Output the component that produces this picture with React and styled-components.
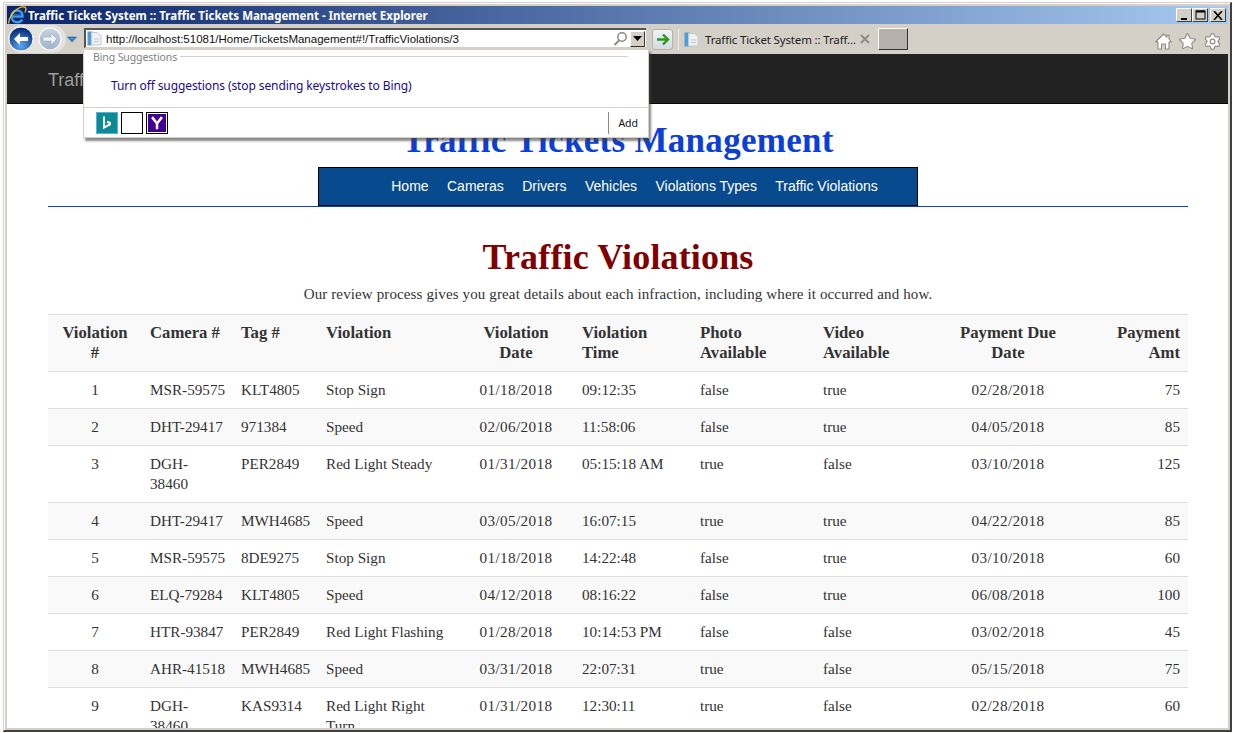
import React from "react";
import styled, { createGlobalStyle } from "styled-components";
import { Settings, Star } from "lucide-react";

const Global = createGlobalStyle`
  html, body { margin: 0; padding: 0; background: #fff; overflow: hidden; }
  #root { height: 733px; }
`;

const chromeFont = `"Noto Sans", "Liberation Sans", sans-serif`;
const pageFont = `"Liberation Serif", "DejaVu Serif", serif`;

const Frame = styled.div`
  box-sizing: border-box;
  position: relative;
  width: 1229px;
  height: 730px;
  margin: 2px 0 0 3px;
  padding: 3px 2px 2px 3px;
  display: flex;
  flex-direction: column;
  background: #d4d0c8;
  border-style: solid;
  border-width: 1px 2px 2px 1px;
  border-color: #d4d0c8 #404040 #404040 #d4d0c8;
  box-shadow: inset 1px 1px 0 #fff;
`;
const TitleBar = styled.div`
  height: 18px;
  flex: none;
  display: flex;
  align-items: center;
  padding-left: 1px;
  background: linear-gradient(90deg, #0a246a, #a6caf0);
`;
const TitleText = styled.span`
  margin-left: 1px;
  font: bold 11.5px ${chromeFont};
  color: #fff;
  white-space: nowrap;
`;
const WinButtons = styled.div`
  margin-left: auto;
  margin-right: 2px;
  display: flex;
`;
const WinButton = styled.div`
  box-sizing: border-box;
  width: 16px;
  height: 14px;
  margin-left: ${(p) => p.$gap || 0}px;
  background: #d4d0c8;
  border: 1px solid;
  border-color: #fff #404040 #404040 #fff;
  display: flex;
  align-items: center;
  justify-content: center;
`;
const Toolbar = styled.div`
  position: relative;
  height: 30px;
  flex: none;
  display: flex;
  align-items: center;
  background: #d4d0c8;
`;
const NavPill = styled.div`
  width: 58px;
  height: 28px;
  margin-left: 1px;
  display: flex;
  align-items: center;
  gap: 4px;
  border-radius: 14px;
  background: #e4e2dc;
`;
const Address = styled.div`
  box-sizing: border-box;
  width: 562px;
  height: 20px;
  margin: -2px 0 0 6px;
  padding: 0 1px 0 1px;
  display: flex;
  align-items: center;
  background: #fff;
  border: 1px solid;
  border-width: 2px 0 1px 2px;
  border-color: #555 #d4d0c8 #d4d0c8 #555;
`;
const Url = styled.span`
  margin-left: 4px;
  flex: 1;
  font: 11.5px "Liberation Sans", sans-serif;
  color: #111;
  white-space: nowrap;
`;
const DropBox = styled.div`
  box-sizing: border-box;
  width: 15px;
  height: 16px;
  margin-left: 2px;
  background: #d4d0c8;
  border: 1px solid;
  border-color: #fff #333 #333 #fff;
  display: flex;
  align-items: center;
  justify-content: center;
`;
const GoButton = styled.div`
  box-sizing: border-box;
  width: 21px;
  height: 21px;
  margin-left: 6px;
  border: 1px solid #b5b2aa;
  border-radius: 3px;
  background: linear-gradient(#f0f3f6, #d2dbe2);
  display: flex;
  align-items: center;
  justify-content: center;
`;
const Tab = styled.div`
  box-sizing: border-box;
  width: 200px;
  height: 21px;
  margin-left: 5px;
  padding-left: 5px;
  display: flex;
  align-items: center;
  border-left: 1px solid #eeece6;
`;
const TabText = styled.span`
  margin-left: 6px;
  width: 155px;
  font: 11.5px ${chromeFont};
  letter-spacing: -0.15px;
  color: #222;
  white-space: nowrap;
`;
const NewTab = styled.div`
  box-sizing: border-box;
  width: 30px;
  height: 22px;
  background: #b5b1aa;
  border: 1px solid;
  border-color: #fff #333 #333 #fff;
`;
const ToolIcons = styled.div`
  margin-left: auto;
  margin-right: 6px;
  margin-top: 4px;
  display: flex;
  align-items: center;
  gap: 6px;
`;
const Popup = styled.div`
  box-sizing: border-box;
  position: absolute;
  left: 76px;
  top: 25px;
  z-index: 5;
  width: 566px;
  height: 89px;
  background: #fff;
  border: 1px solid #d4d0c8;
  box-shadow: 2px 3px 2px rgba(60, 60, 60, 0.6);
  display: flex;
  flex-direction: column;
`;
const PopupHead = styled.div`
  height: 13px;
  margin: 0 20px 0 9px;
  display: flex;
  align-items: center;
  gap: 3px;
  font: 10.5px ${chromeFont};
  letter-spacing: -0.1px;
  color: #808080;
`;
const HeadLine = styled.div`
  flex: 1;
  height: 1px;
  background: #d4d0c8;
`;
const Suggest = styled.div`
  height: 44px;
  padding-left: 27px;
  display: flex;
  align-items: center;
  font: 12px ${chromeFont};
  letter-spacing: -0.1px;
  color: #1a0a8c;
  border-bottom: 1px solid #d4d0c8;
`;
const Providers = styled.div`
  flex: 1;
  padding: 4px 10px 0 12px;
  display: flex;
  align-items: flex-start;
`;
const Provider = styled.div`
  box-sizing: border-box;
  width: 22px;
  height: 22px;
  margin-right: 3px;
  background: #fff;
  border: 1px solid ${(p) => p.$edge || "#000"};
  display: flex;
  align-items: center;
  justify-content: center;
`;
const AddLink = styled.div`
  margin-left: auto;
  height: 22px;
  padding-left: 9px;
  display: flex;
  align-items: center;
  border-left: 1px solid #888;
  font: 10.5px ${chromeFont};
  color: #111;
`;
const Page = styled.div`
  flex: 1;
  min-height: 0;
  overflow: hidden;
  background: #fff;
  font-family: ${pageFont};
  color: #333;
`;
const TopBar = styled.div`
  box-sizing: border-box;
  height: 50px;
  padding: 16px 0 0 41px;
  background: #222;
  border-bottom: 1px solid #080808;
  font: 18px/20px "Liberation Sans", sans-serif;
  color: #9d9d9d;
`;
const Container = styled.div`
  padding: 0 40px 0 41px;
`;
const Header = styled.div`
  border-bottom: 1px solid #0d3fd6;
  display: flex;
  flex-direction: column;
  align-items: center;
`;
const AppTitle = styled.h1`
  margin: 17px 0 6px;
  font: bold 35px/40px ${pageFont};
  letter-spacing: 0.3px;
  color: #0d3fd6;
`;
const NavBox = styled.div`
  box-sizing: border-box;
  width: 600px;
  height: 39px;
  display: flex;
  justify-content: center;
  align-items: center;
  gap: 18.4px;
  padding: 0 0 2px 33px;
  background: #084a8e;
  border: 1px solid #000;
`;
const NavLink = styled.a`
  font: 14px "Liberation Sans", sans-serif;
  color: #fff;
`;
const Heading = styled.h2`
  margin: 30px 0 7px;
  text-align: center;
  font: bold 36px/40px ${pageFont};
  letter-spacing: 0.15px;
  color: #800000;
`;
const Lead = styled.p`
  margin: 0 0 10px;
  text-align: center;
  font-size: 15px;
  line-height: 20px;
  letter-spacing: 0.125px;
`;
const Table = styled.table`
  width: 1140px;
  table-layout: fixed;
  border-collapse: collapse;
  font-size: 15.2px;
  line-height: 20px;
`;
const HeadRow = styled.tr`
  background: #f9f9f9;
  border-top: 1px solid #ddd;
`;
const Row = styled.tr`
  background: ${(p) => (p.$striped ? "#f9f9f9" : "#fff")};
`;
const Th = styled.th`
  padding: 8px;
  text-align: ${(p) => p.$align || "left"};
  vertical-align: top;
  font-size: 16.7px;
  font-weight: bold;
  white-space: pre;
`;
const Td = styled.td`
  padding: 8px;
  border-top: 1px solid #ddd;
  text-align: ${(p) => p.$align || "left"};
  vertical-align: top;
  white-space: pre;
  letter-spacing: ${(p) => (p.$spaced ? "0.38px" : "0")};
`;

const columns = [
  { title: "Violation\n#", width: 94, align: "center" },
  { title: "Camera #", width: 91 },
  { title: "Tag #", width: 85 },
  { title: "Violation", width: 140 },
  { title: "Violation\nDate", width: 116, align: "center", spaced: true },
  { title: "Violation\nTime", width: 118 },
  { title: "Photo\nAvailable", width: 123 },
  { title: "Video\nAvailable", width: 135 },
  { title: "Payment Due\nDate", width: 116, align: "center", spaced: true },
  { title: "Payment\nAmt", width: 122, align: "right" },
];

const rows = [
  ["1", "MSR-59575", "KLT4805", "Stop Sign", "01/18/2018", "09:12:35", "false", "true", "02/28/2018", "75"],
  ["2", "DHT-29417", "971384", "Speed", "02/06/2018", "11:58:06", "false", "true", "04/05/2018", "85"],
  ["3", "DGH-\n38460", "PER2849", "Red Light Steady", "01/31/2018", "05:15:18 AM", "true", "false", "03/10/2018", "125"],
  ["4", "DHT-29417", "MWH4685", "Speed", "03/05/2018", "16:07:15", "true", "true", "04/22/2018", "85"],
  ["5", "MSR-59575", "8DE9275", "Stop Sign", "01/18/2018", "14:22:48", "false", "true", "03/10/2018", "60"],
  ["6", "ELQ-79284", "KLT4805", "Speed", "04/12/2018", "08:16:22", "false", "true", "06/08/2018", "100"],
  ["7", "HTR-93847", "PER2849", "Red Light Flashing", "01/28/2018", "10:14:53 PM", "false", "false", "03/02/2018", "45"],
  ["8", "AHR-41518", "MWH4685", "Speed", "03/31/2018", "22:07:31", "true", "false", "05/15/2018", "75"],
  ["9", "DGH-\n38460", "KAS9314", "Red Light Right\nTurn", "01/31/2018", "12:30:11", "true", "false", "02/28/2018", "60"],
];

const navItems = ["Home", "Cameras", "Drivers", "Vehicles", "Violations Types", "Traffic Violations"];

const IeLogo = () => (
  <svg width="19" height="19" viewBox="0 0 19 19">
    <path d="M4 10.5h10.5c.3-3.4-2-6-5.200-6C6 4.500 3.500 7 3.500 10.500s2.400 5.700 5.700 5.700c2.400 0 4.200-1 5-2.800" fill="none" stroke="#3f9be8" strokeWidth="2.400" />
    <path d="M1 17.500C-.5 14 5 5 11 2c3-1.500 7-2 7 1 0 1.200-.6 2.500-1.300 3.500" fill="none" stroke="#f0b429" strokeWidth="1.300" />
    <path d="M6 8.500h6.500" stroke="#1c5fb4" strokeWidth="1.500" />
  </svg>
);

const BackIcon = () => (
  <svg width="26" height="26" viewBox="0 0 26 26">
    <defs>
      <radialGradient id="backFill" cx="50%" cy="80%" r="70%">
        <stop offset="0" stopColor="#5aa8ee" />
        <stop offset="1" stopColor="#0a2f80" />
      </radialGradient>
    </defs>
    <circle cx="13" cy="13" r="12" fill="url(#backFill)" stroke="#fff" strokeWidth="1" />
    <path d="M6 13l6-6v4h8v4h-8v4z" fill="#fff" />
  </svg>
);

const ForwardIcon = () => (
  <svg width="24" height="24" viewBox="0 0 24 24">
    <defs>
      <linearGradient id="fwdFill" x1="0" y1="0" x2="0" y2="1">
        <stop offset="0" stopColor="#c5d2e0" />
        <stop offset="1" stopColor="#9fb4cc" />
      </linearGradient>
    </defs>
    <circle cx="12" cy="12" r="11" fill="url(#fwdFill)" stroke="#f4f4f2" strokeWidth="1.500" />
    <path d="M19 12l-6-6v4H5v4h8v4z" fill="#eef2f6" stroke="#8ea3ba" strokeWidth=".5" />
  </svg>
);

const PageIcon = () => (
  <svg width="15" height="15" viewBox="0 0 15 15">
    <rect x="0.500" y="0.500" width="5" height="14" fill="#4f9bdc" />
    <path d="M4.500 1.500h6l3.500 3v9.500h-9.500z" fill="#eef1f4" stroke="#c3c9cf" />
    <path d="M7 8h5M7 10.500h5" stroke="#c3c9cf" />
  </svg>
);

const HomeIcon = () => (
  <svg width="17" height="17" viewBox="0 0 17 17">
    <path d="M8.500 1L12 4.200V2h2v4l2.500 3H14v7h-3.500v-5h-4v5H3V9H.5z" fill="#fff" stroke="#8d8b85" strokeWidth="1.100" strokeLinejoin="round" />
  </svg>
);

const BingMark = () => (
  <svg width="20" height="20" viewBox="0 0 20 20">
    <rect width="20" height="20" fill="#0e8a94" />
    <path d="M7 3.500v11l6-3.200v-1.300l-3-1.200" fill="none" stroke="#fff" strokeWidth="2" />
  </svg>
);

const YahooMark = () => (
  <svg width="18" height="18" viewBox="0 0 20 20">
    <rect width="20" height="20" fill="#410093" />
    <path d="M4.500 3.500l5.500 7 5.500-7M10 10.500v6.500" fill="none" stroke="#fff" strokeWidth="2.800" />
  </svg>
);

export default function App() {
  return (
    <>
      <Global />
      <Frame>
        <TitleBar>
          <IeLogo />
          <TitleText>Traffic Ticket System :: Traffic Tickets Management - Internet Explorer</TitleText>
          <WinButtons>
            <WinButton>
              <svg width="9" height="9"><rect x="1" y="7" width="6" height="2" fill="#000" /></svg>
            </WinButton>
            <WinButton>
              <svg width="11" height="10"><rect x="1" y="1" width="9" height="8" fill="none" stroke="#000" /><rect x="1" y="0.500" width="9" height="2" fill="#000" /></svg>
            </WinButton>
            <WinButton $gap={2}>
              <svg width="10" height="9"><path d="M1 0l8 9M9 0l-8 9" stroke="#000" strokeWidth="1.600" /></svg>
            </WinButton>
          </WinButtons>
        </TitleBar>
        <Toolbar>
          <NavPill>
            <BackIcon />
            <ForwardIcon />
          </NavPill>
          <svg width="12" height="12" viewBox="0 0 12 12">
            <path d="M1.500 4h9L6 9z" fill="#2f8fd0" stroke="#14558c" strokeWidth=".6" />
          </svg>
          <Address>
            <PageIcon />
            <Url>http://localhost:51081/Home/TicketsManagement#!/TrafficViolations/3</Url>
            <svg width="15" height="15" viewBox="0 0 15 15">
              <circle cx="9" cy="6" r="4.200" fill="none" stroke="#8a8a86" strokeWidth="1.500" />
              <path d="M6 9.500L1.500 14" stroke="#8a8a86" strokeWidth="2" />
            </svg>
            <DropBox>
              <svg width="9" height="5"><path d="M0 0h9L4.500 5z" fill="#000" /></svg>
            </DropBox>
          </Address>
          <GoButton>
            <svg width="14" height="13" viewBox="0 0 14 13">
              <path d="M1 6.500h10M7 1.500l5 5-5 5" fill="none" stroke="#2a9a1c" strokeWidth="2.400" />
            </svg>
          </GoButton>
          <Tab>
            <PageIcon />
            <TabText>Traffic Ticket System :: Traff...</TabText>
            <svg width="10" height="10"><path d="M1 1l8 8M9 1l-8 8" stroke="#8f8d88" strokeWidth="2" /></svg>
          </Tab>
          <NewTab />
          <ToolIcons>
            <HomeIcon />
            <Star size={19} fill="#fff" stroke="#8d8b85" strokeWidth={1.400} />
            <Settings size={19} fill="#fff" stroke="#8d8b85" strokeWidth={1.500} />
          </ToolIcons>
          <Popup>
            <PopupHead>
              Bing Suggestions
              <HeadLine />
            </PopupHead>
            <Suggest>Turn off suggestions (stop sending keystrokes to Bing)</Suggest>
            <Providers>
              <Provider $edge="#55b4dc"><BingMark /></Provider>
              <Provider />
              <Provider><YahooMark /></Provider>
              <AddLink>Add</AddLink>
            </Providers>
          </Popup>
        </Toolbar>
        <Page>
          <TopBar>Traffic Ticket System</TopBar>
          <Container>
            <Header>
              <AppTitle>Traffic Tickets Management</AppTitle>
              <NavBox>
                {navItems.map((item) => (
                  <NavLink key={item}>{item}</NavLink>
                ))}
              </NavBox>
            </Header>
            <Heading>Traffic Violations</Heading>
            <Lead>Our review process gives you great details about each infraction, including where it occurred and how.</Lead>
            <Table>
              <colgroup>
                {columns.map((col) => (
                  <col key={col.title} width={col.width} />
                ))}
              </colgroup>
              <thead>
                <HeadRow>
                  {columns.map((col) => (
                    <Th key={col.title} $align={col.align}>{col.title}</Th>
                  ))}
                </HeadRow>
              </thead>
              <tbody>
                {rows.map((row, r) => (
                  <Row key={row[0]} $striped={r % 2 === 1}>
                    {row.map((cell, c) => (
                      <Td key={c} $align={columns[c].align} $spaced={columns[c].spaced}>{cell}</Td>
                    ))}
                  </Row>
                ))}
              </tbody>
            </Table>
          </Container>
        </Page>
      </Frame>
    </>
  );
}
